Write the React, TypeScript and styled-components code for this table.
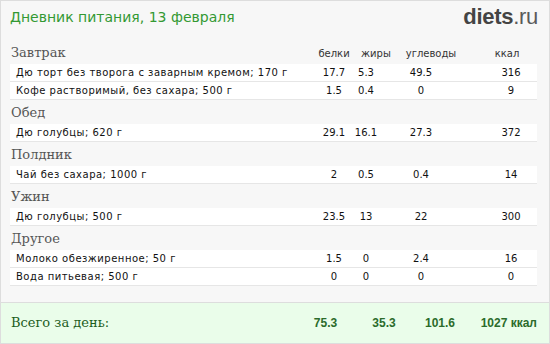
import styled, { createGlobalStyle } from 'styled-components';

type Item = {
  name: string;
  protein: string;
  fat: string;
  carbs: string;
  kcal: string;
};

type Meal = {
  title: string;
  items: Item[];
};

const meals: Meal[] = [
  {
    title: 'Завтрак',
    items: [
      { name: 'Дю торт без творога с заварным кремом; 170 г', protein: '17.7', fat: '5.3', carbs: '49.5', kcal: '316' },
      { name: 'Кофе растворимый, без сахара; 500 г', protein: '1.5', fat: '0.4', carbs: '0', kcal: '9' },
    ],
  },
  {
    title: 'Обед',
    items: [{ name: 'Дю голубцы; 620 г', protein: '29.1', fat: '16.1', carbs: '27.3', kcal: '372' }],
  },
  {
    title: 'Полдник',
    items: [{ name: 'Чай без сахара; 1000 г', protein: '2', fat: '0.5', carbs: '0.4', kcal: '14' }],
  },
  {
    title: 'Ужин',
    items: [{ name: 'Дю голубцы; 500 г', protein: '23.5', fat: '13', carbs: '22', kcal: '300' }],
  },
  {
    title: 'Другое',
    items: [
      { name: 'Молоко обезжиренное; 50 г', protein: '1.5', fat: '0', carbs: '2.4', kcal: '16' },
      { name: 'Вода питьевая; 500 г', protein: '0', fat: '0', carbs: '0', kcal: '0' },
    ],
  },
];

const GlobalStyle = createGlobalStyle`
  html, body {
    margin: 0;
    padding: 0;
    background: #ffffff;
  }
  * {
    box-sizing: border-box;
  }
`;

const Frame = styled.div`
  width: 550px;
  height: 344px;
  border: 1px solid #dddddd;
  background: #f7f7f7;
  display: flex;
  flex-direction: column;
  overflow: hidden;
`;

const Header = styled.div`
  height: 39px;
  display: flex;
  justify-content: space-between;
  align-items: flex-start;
  padding: 0 11px 0 9px;
`;

const Title = styled.h1`
  margin: 8px 0 0;
  font-family: 'DejaVu Sans', Verdana, sans-serif;
  font-weight: normal;
  font-size: 14px;
  line-height: 17px;
  color: #339933;
`;

const Logo = styled.div`
  margin-top: 4px;
  font-family: 'Liberation Sans', Arial, sans-serif;
  font-size: 22px;
  line-height: 24px;
  color: #444444;
  letter-spacing: -0.3px;
`;

const LogoStrong = styled.b`
  font-weight: bold;
`;

const LogoTail = styled.span`
  color: #5a5a5a;
`;

const Body = styled.div`
  padding: 0 12px 0 9px;
`;

const HeadingRow = styled.div`
  height: 24px;
  display: grid;
  grid-template-columns: 1fr 36px 48px 62px 75px;
  align-items: end;
  padding-bottom: 3px;
`;

const Heading = styled.div`
  font-family: 'DejaVu Serif', Georgia, serif;
  font-size: 13px;
  line-height: 16px;
  color: #555555;
  padding-left: 1px;
`;

const ColLabel = styled.div<{ pad?: number }>`
  font-family: 'DejaVu Sans', Verdana, sans-serif;
  font-size: 10px;
  line-height: 14px;
  color: #333333;
  text-align: center;
  padding-left: ${({ pad }) => pad || 0}px;
  white-space: nowrap;
`;

const Row = styled.div`
  height: 18px;
  display: grid;
  grid-template-columns: 1fr 36px 28px 82px 75px;
  align-items: center;
  background: #ffffff;
  border-bottom: 1px solid #e6e6e6;
  font-family: 'DejaVu Sans', Verdana, sans-serif;
  font-size: 10px;
  color: #111111;
`;

const ItemName = styled.div`
  padding-left: 6px;
  letter-spacing: 0.5px;
  white-space: nowrap;
`;

const Cell = styled.div<{ pad?: number }>`
  text-align: center;
  padding-left: ${({ pad }) => pad || 0}px;
  white-space: nowrap;
`;

const Spacer = styled.div`
  flex: 1;
`;

const Totals = styled.div`
  height: 42px;
  margin: 0 -1px -1px;
  background: #eafdea;
  border-top: 1px solid #dddddd;
  border-bottom: 1px solid #dddddd;
  display: grid;
  grid-template-columns: 1fr 59px 58px 54px 70px;
  align-items: center;
  padding: 0 13px 0 11px;
`;

const TotalLabel = styled.div`
  font-family: 'DejaVu Serif', Georgia, serif;
  font-size: 13px;
  color: #1d5e1d;
  padding-bottom: 2px;
`;

const TotalValue = styled.div<{ right?: boolean }>`
  font-family: 'Liberation Sans', Arial, sans-serif;
  font-weight: bold;
  font-size: 12px;
  color: #2b6b2b;
  text-align: ${({ right }) => (right ? 'right' : 'center')};
  white-space: nowrap;
`;

export default function App() {
  return (
    <>
      <GlobalStyle />
      <Frame>
        <Header>
          <Title>Дневник питания, 13 февраля</Title>
          <Logo>
            <LogoStrong>diets</LogoStrong>
            <LogoTail>.ru</LogoTail>
          </Logo>
        </Header>
        <Body>
          {meals.map((meal, i) => (
            <div key={meal.title}>
              <HeadingRow>
                <Heading>{meal.title}</Heading>
                {i === 0 && (
                  <>
                    <ColLabel>белки</ColLabel>
                    <ColLabel>жиры</ColLabel>
                    <ColLabel>углеводы</ColLabel>
                    <ColLabel pad={15}>ккал</ColLabel>
                  </>
                )}
              </HeadingRow>
              {meal.items.map((item) => (
                <Row key={item.name}>
                  <ItemName>{item.name}</ItemName>
                  <Cell>{item.protein}</Cell>
                  <Cell>{item.fat}</Cell>
                  <Cell>{item.carbs}</Cell>
                  <Cell pad={23}>{item.kcal}</Cell>
                </Row>
              ))}
            </div>
          ))}
        </Body>
        <Spacer />
        <Totals>
          <TotalLabel>Всего за день:</TotalLabel>
          <TotalValue>75.3</TotalValue>
          <TotalValue>35.3</TotalValue>
          <TotalValue>101.6</TotalValue>
          <TotalValue right>1027 ккал</TotalValue>
        </Totals>
      </Frame>
    </>
  );
}
